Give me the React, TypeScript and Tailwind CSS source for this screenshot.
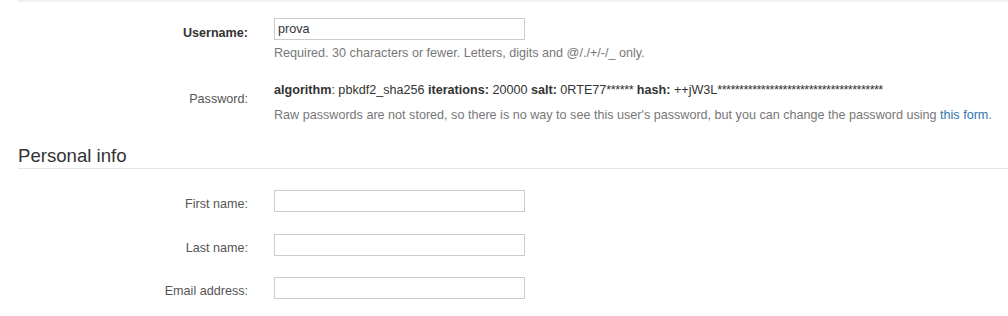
const font = "font-['Liberation_Sans','Helvetica_Neue',Arial,sans-serif]";

function Field({
  label,
  bold,
  value,
  className,
}: {
  label: string;
  bold?: boolean;
  value?: string;
  className?: string;
}) {
  return (
    <div className={`flex items-start ${className ?? ""}`}>
      <label
        className={`w-[248px] shrink-0 text-right text-[12.6px] ${
          bold ? "pt-[8px] leading-[14px] font-bold text-[#333]" : "pt-[7px] leading-[15px] text-[#555]"
        }`}
      >
        {label}
      </label>
      <input
        readOnly
        defaultValue={value}
        className="ml-[26px] h-[22px] w-[251px] border border-[#ccc] bg-white px-[3px] text-[12.6px] leading-[20px] text-[#333] outline-none"
      />
    </div>
  );
}

export default function App() {
  return (
    <div className={`h-[316px] w-[1008px] overflow-hidden bg-white ${font}`}>
      {/* shadow of the panel above */}
      <div className="ml-[18px] h-[3px] bg-linear-to-b from-[#ebebeb] to-white" />

      {/* Username */}
      <div className="mt-[15px]">
        <Field label="Username:" bold value="prova" />
        <p className="ml-[274px] mt-[5px] text-[12.6px] leading-[16px] text-[#777]">
          Required. 30 characters or fewer. Letters, digits and @/./+/-/_ only.
        </p>
      </div>

      {/* Password */}
      <div className="mt-[21px] flex items-start">
        <div className="w-[248px] shrink-0 pt-[9px] text-right text-[12.6px] leading-[16px] text-[#555]">
          Password:
        </div>
        <div className="ml-[26px] text-[12.6px] leading-[16px]">
          <p className="text-[#333]">
            <strong>algorithm</strong>: pbkdf2_sha256 <strong>iterations:</strong> 20000{" "}
            <strong>salt:</strong> 0RTE77<span className="tracking-[-0.4px]">******</span>{" "}
            <strong>hash:</strong> ++jW3L
            <span className="tracking-[-0.55px]">{"**************************************"}</span>
          </p>
          <p className="mt-[9px] text-[#777]">
            Raw passwords are not stored, so there is no way to see this user's password, but you
            can change the password using{" "}
            <a href="#" className="text-[#3174b0]">
              this form
            </a>
            .
          </p>
        </div>
      </div>

      {/* Personal info */}
      <div className="mt-[22px] ml-[18px] border-b border-[#e5e5e5] pb-[1px]">
        <h2 className="text-[18.6px] leading-[22px] text-[#333]">Personal info</h2>
      </div>

      <Field label="First name:" className="mt-[21px]" />
      <Field label="Last name:" className="mt-[22px]" />
      <Field label="Email address:" className="mt-[21px]" />
    </div>
  );
}
